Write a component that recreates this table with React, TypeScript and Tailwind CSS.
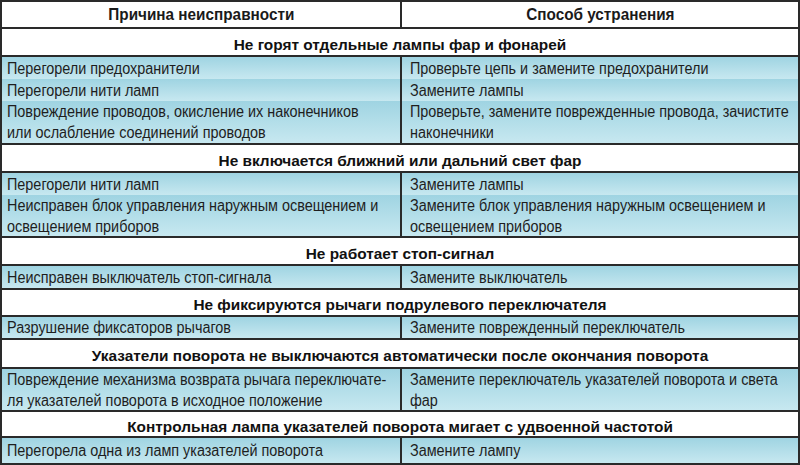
type Row = { cause: string[]; fix: string[]; h: string };
type Group = { title: string; h: string; rows: Row[] };

const groups: Group[] = [
  {
    title: 'Не горят отдельные лампы фар и фонарей',
    h: 'h-[28px]',
    rows: [
      { cause: ['Перегорели предохранители'], fix: ['Проверьте цепь и замените предохранители'], h: 'h-[22px]' },
      { cause: ['Перегорели нити ламп'], fix: ['Замените лампы'], h: 'h-[22px]' },
      {
        cause: ['Повреждение проводов, окисление их наконечников', 'или ослабление соединений проводов'],
        fix: ['Проверьте, замените поврежденные провода, зачистите', 'наконечники'],
        h: 'h-[44px]',
      },
    ],
  },
  {
    title: 'Не включается ближний или дальний свет фар',
    h: 'h-[28px]',
    rows: [
      { cause: ['Перегорели нити ламп'], fix: ['Замените лампы'], h: 'h-[22px]' },
      {
        cause: ['Неисправен блок управления наружным освещением и', 'освещением приборов'],
        fix: ['Замените блок управления наружным освещением и', 'освещением приборов'],
        h: 'h-[43px]',
      },
    ],
  },
  {
    title: 'Не работает стоп-сигнал',
    h: 'h-[28px]',
    rows: [{ cause: ['Неисправен выключатель стоп-сигнала'], fix: ['Замените выключатель'], h: 'h-[24px]' }],
  },
  {
    title: 'Не фиксируются рычаги подрулевого переключателя',
    h: 'h-[27px]',
    rows: [{ cause: ['Разрушение фиксаторов рычагов'], fix: ['Замените поврежденный переключатель'], h: 'h-[23px]' }],
  },
  {
    title: 'Указатели поворота не выключаются автоматически после окончания поворота',
    h: 'h-[29px]',
    rows: [
      {
        cause: ['Повреждение механизма возврата рычага переключате-', 'ля указателей поворота в исходное положение'],
        fix: ['Замените переключатель указателей поворота и света', 'фар'],
        h: 'h-[43px]',
      },
    ],
  },
  {
    title: 'Контрольная лампа указателей поворота мигает с удвоенной частотой',
    h: 'h-[26px]',
    rows: [{ cause: ['Перегорела одна из ламп указателей поворота'], fix: ['Замените лампу'], h: 'h-[27px]' }],
  },
];

const font = "font-['Liberation_Sans',Arial,sans-serif]";

function Cell({ lines, right }: { lines: string[]; right?: boolean }) {
  return (
    <div
      className={`flex flex-col justify-center leading-[21px] overflow-hidden ${right ? 'pl-[8px]' : 'pl-[5px] border-r-2 border-[#2a2a2a]'}`}
    >
      {lines.map((l) => (
        <span key={l} className="inline-block origin-left scale-x-[0.9] whitespace-nowrap">
          {l}
        </span>
      ))}
    </div>
  );
}

export default function App() {
  return (
    <div className={`w-[800px] h-[465px] overflow-hidden bg-white text-[#1e1e1e] border-x-2 border-[#2a2a2a] ${font}`}>
      <div className="grid grid-cols-[400px_1fr] h-[29px] border-y-2 border-[#2a2a2a] text-[17px] font-bold text-[#1a1a1a]">
        <div className="flex items-center justify-center border-r-2 border-[#2a2a2a]">
          <span className="inline-block scale-x-[0.9] whitespace-nowrap">Причина неисправности</span>
        </div>
        <div className="flex items-center justify-center">
          <span className="inline-block scale-x-[0.9] whitespace-nowrap">Способ устранения</span>
        </div>
      </div>

      {groups.map((g) => (
        <div key={g.title}>
          <div
            className={`${g.h} flex items-center justify-center pt-[5px] border-b-2 border-[#2a2a2a] text-[15.4px] font-bold text-[#111]`}
          >
            <span className="whitespace-nowrap">{g.title}</span>
          </div>
          {g.rows.map((r, i) => (
            <div
              key={i}
              className={`${r.h} grid grid-cols-[400px_1fr] bg-gradient-to-b from-[#9fd4e2] to-[#c7e8f0] text-[16px] last:border-b-2 border-[#2a2a2a]`}
            >
              <Cell lines={r.cause} />
              <Cell lines={r.fix} right />
            </div>
          ))}
        </div>
      ))}
    </div>
  );
}
